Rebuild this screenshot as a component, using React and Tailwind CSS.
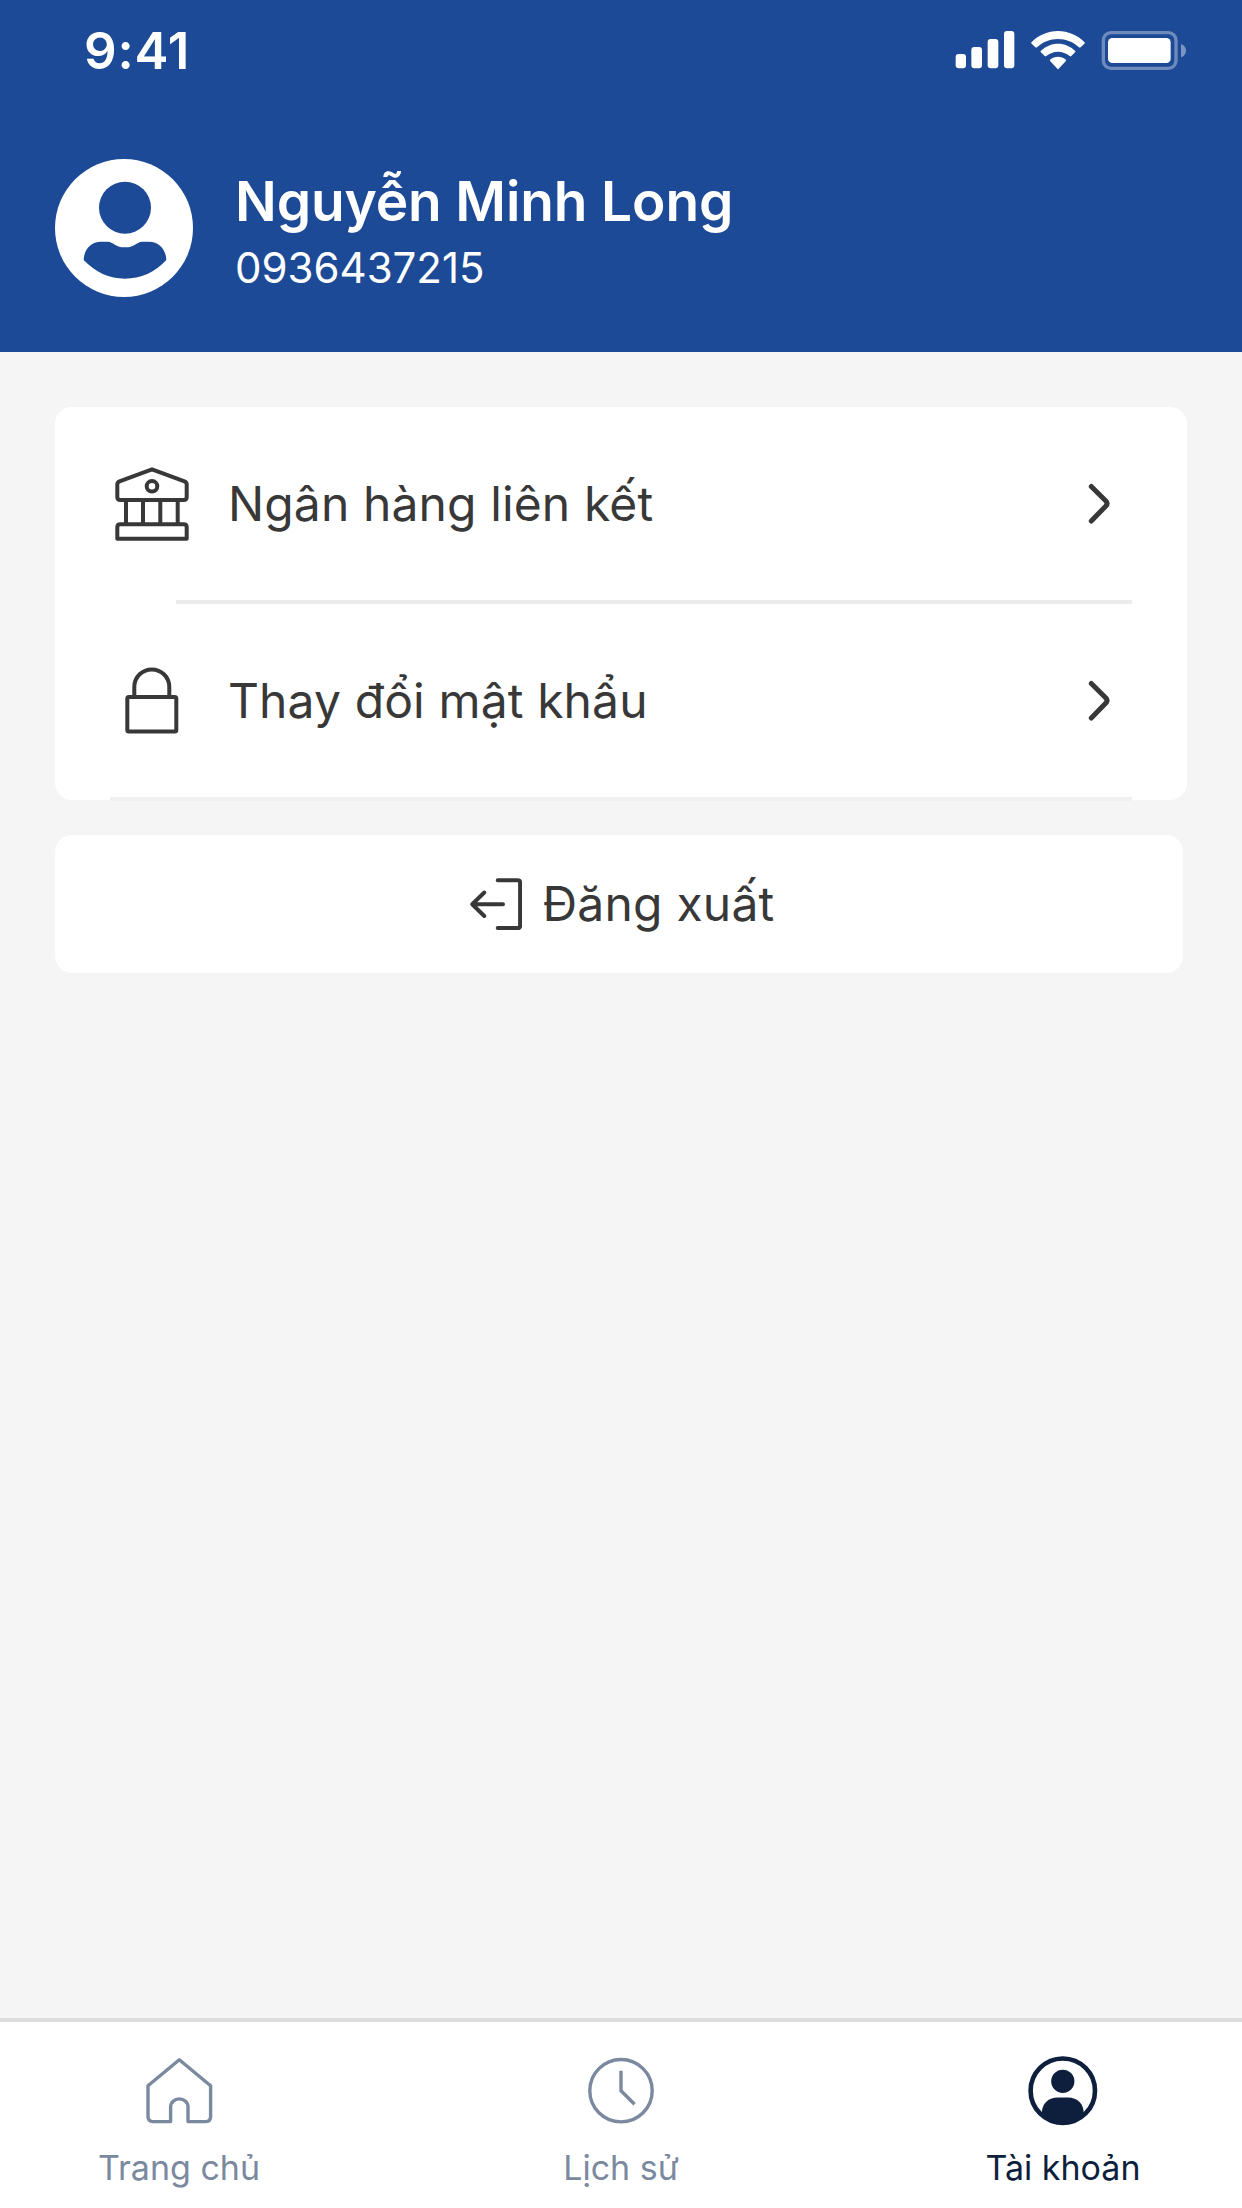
import React from 'react';

const SignalIcon = () => (
    <svg className="w-[60px] h-[38px]" viewBox="0 0 180 114" fill="currentColor">
        <rect x="2" y="69" width="31" height="43" rx="9" />
        <rect x="49" y="48" width="32" height="64" rx="9" />
        <rect x="98" y="24" width="32" height="88" rx="9" />
        <rect x="147" y="0" width="31" height="112" rx="9" />
    </svg>
);

const WifiIcon = () => (
    <svg className="w-[54px] h-[39px]" viewBox="0 0 162 117" fill="currentColor">
        <path d="M81 0C111 0 139 12 160 33C162 35 162 36 160 38L149 49C147 51 146 51 144 49C127 33 105 24 81 24C57 24 35 33 18 49C16 51 15 51 13 49L2 38C0 36 0 35 2 33C23 12 51 0 81 0Z" />
        <path d="M81 38C101 38 118 46 132 59C134 61 134 62 132 64L121 75C119 77 118 77 116 75C106 67 94 62 81 62C68 62 56 67 46 75C44 77 43 77 41 75L30 64C28 62 28 61 30 59C44 46 61 38 81 38Z" />
        <path d="M81 77C90 77 97 80 103 85C106 87 106 88 104 91L83 113C81 115 81 115 79 113L58 91C56 88 56 87 59 85C65 80 72 77 81 77Z" />
    </svg>
);

const BatteryIcon = () => (
    <svg className="w-[85px] h-[40px]" viewBox="0 0 255 120" fill="none">
        <rect x="7" y="5" width="218" height="107" rx="23" stroke="white" strokeOpacity="0.36" strokeWidth="10" />
        <rect x="21" y="21" width="188" height="75" rx="13" fill="white" />
        <path d="M240 39C249 42 255 50 255 59C255 68 249 76 240 79Z" fill="white" fillOpacity="0.42" />
    </svg>
);

const AvatarIcon = () => (
    <svg className="w-[138px] h-[138px]" viewBox="0 0 414 414">
        <circle cx="207" cy="207" r="207" fill="white" />
        <g fill="#1d4a96">
            <circle cx="210" cy="146" r="78" />
            <path d="M86 303C87 271 108 248 138 248H158C176 248 178 265 210 265C242 265 244 248 262 248H282C312 248 333 271 334 303C301 340 257 359 210 359C163 359 121 340 86 303Z" />
        </g>
    </svg>
);

const BankIcon = () => (
    <svg className="w-[74px] h-[74px]" viewBox="0 0 74 74" fill="none" stroke="currentColor" strokeWidth="4">
        <path d="M37 2.3L69.5 14.3C71 14.9 71.7 16 71.7 17.5V30C71.7 32 70.7 33 68.7 33H5.3C3.3 33 2.3 32 2.3 30V17.5C2.3 16 3 14.9 4.5 14.3L37 2.3Z" strokeLinejoin="round" />
        <circle cx="37" cy="19.3" r="5.3" />
        <path d="M11 33V57.5M28 33V57.5M45.3 33V57.5M62.7 33V57.5" />
        <path d="M2.3 71.7V60.3C2.3 58.3 3.3 57.3 5.3 57.3H68.7C70.7 57.3 71.7 58.3 71.7 60.3V71.7H2.3Z" strokeLinejoin="round" />
    </svg>
);

const LockIcon = () => (
    <svg className="w-[74px] h-[74px]" viewBox="0 0 74 74" fill="none" stroke="currentColor" strokeWidth="4">
        <rect x="12.3" y="32.9" width="49" height="34.7" rx="1.5" />
        <path d="M19.3 32.9V22.9A17.5 17.5 0 0 1 54.3 22.9V32.9" />
    </svg>
);

const ChevronIcon = () => (
    <svg className="w-[24px] h-[42px]" viewBox="0 0 24 42" fill="none" stroke="currentColor" strokeWidth="5" strokeLinecap="round" strokeLinejoin="round">
        <path d="M4.3 3.4L18.9 18C20.3 19.6 20.3 21.6 18.9 23L4.3 38" />
    </svg>
);

const LogoutIcon = () => (
    <svg className="w-[53px] h-[53px]" viewBox="0 0 53 53" fill="none" stroke="currentColor" strokeWidth="4" strokeLinecap="round" strokeLinejoin="round">
        <path d="M28.7 2.3H48.8C50.3 2.3 51.1 3.1 51.1 4.6V47.7C51.1 49.2 50.3 50 48.8 50H28.7" />
        <path d="M34 26.2H3.5M15.3 14.5L3.2 26.2L15.3 38" />
    </svg>
);

const HomeIcon = () => (
    <svg className="w-[70px] h-[70px]" viewBox="0 0 70 70" fill="none" stroke="currentColor" strokeWidth="3.4" strokeLinejoin="round">
        <path d="M35.3 3.8L66.6 29.7V60.5C66.6 63.8 64.9 65.6 61.6 65.6H44V51C44 46.3 40.2 42.9 35.3 42.9C30.4 42.9 26.6 46.3 26.6 51V65.6H9C5.7 65.6 4 63.8 4 60.5V29.7L35.3 3.8Z" />
    </svg>
);

const ClockIcon = () => (
    <svg className="w-[70px] h-[70px]" viewBox="0 0 70 70" fill="none" stroke="currentColor" strokeWidth="3.4">
        <circle cx="35" cy="34.7" r="31.2" />
        <path d="M35 14.7V34.7L48.6 48.3" />
    </svg>
);

const AccountIcon = () => (
    <svg className="w-[70px] h-[70px]" viewBox="0 0 70 70">
        <circle cx="34.8" cy="34.7" r="32.2" fill="none" stroke="currentColor" strokeWidth="4.6" />
        <circle cx="34.8" cy="25.3" r="11.6" fill="currentColor" />
        <path d="M13.8 57.7C13.8 47.7 19.8 41.4 29.8 41.4H39.8C49.8 41.4 55.8 47.7 55.8 57.7C49.8 65.7 43.8 68.7 34.8 68.7C25.8 68.7 19.8 65.7 13.8 57.7Z" fill="currentColor" />
    </svg>
);

const MenuItem = ({ icon, label }) => (
    <div className="flex items-center h-[193px] pl-[60px] pr-[76px]">
        {icon}
        <span className="ml-[39px] flex-1 text-5xl leading-[60px] tracking-[0.12px] whitespace-nowrap">{label}</span>
        <ChevronIcon />
    </div>
);

const tabs = [
    { label: 'Trang chủ', icon: <HomeIcon />, color: 'text-[#7b899f]' },
    { label: 'Lịch sử', icon: <ClockIcon />, color: 'text-[#7b899f]' },
    { label: 'Tài khoản', icon: <AccountIcon />, color: 'text-[#0d1f3c]' },
];

const App = () => {
    return (
        <div className="flex flex-col w-[1242px] h-[2208px] bg-[#f5f5f5] text-[#383838] font-['Inter',sans-serif] overflow-hidden">
            <header className="h-[352px] shrink-0 bg-[#1d4a96] text-white">
                <div className="flex justify-between h-[102px] pl-[84px] pr-[56px]">
                    <span className="mt-[21px] text-[51px] leading-[60px] tracking-[0.8px] font-semibold">9:41</span>
                    <div className="flex items-start mt-[31px] gap-[16px]">
                        <SignalIcon />
                        <WifiIcon />
                        <BatteryIcon />
                    </div>
                </div>
                <div className="flex items-center h-[138px] mt-[57px] pl-[55px]">
                    <AvatarIcon />
                    <div className="ml-[42px] pt-[12px]">
                        <p className="text-[55px] leading-[68px] tracking-[-0.12px] font-semibold">Nguyễn Minh Long</p>
                        <p className="text-[42px] leading-[66px]">0936437215</p>
                    </div>
                </div>
            </header>

            <main className="flex-1 pt-[55px] pl-[55px]">
                <div className="w-[1132px] h-[393px] bg-white rounded-[17px]">
                    <MenuItem icon={<BankIcon />} label="Ngân hàng liên kết" />
                    <div className="h-[4px] ml-[121px] mr-[55px] bg-[#ebebeb]" />
                    <MenuItem icon={<LockIcon />} label="Thay đổi mật khẩu" />
                    <div className="h-[4px] ml-[55px] mr-[55px] bg-[#f0f0f0]" />
                </div>
                <button className="flex items-center justify-center w-[1128px] h-[138px] mt-[35px] pl-[5px] bg-white rounded-[17px]">
                    <LogoutIcon />
                    <span className="ml-[21px] text-5xl leading-[60px] tracking-[0.2px]">Đăng xuất</span>
                </button>
            </main>

            <nav className="flex justify-between h-[190px] shrink-0 px-[55px] pt-[34px] border-t-4 border-[#dedede] bg-white">
                {tabs.map((tab) => (
                    <div key={tab.label} className={`flex flex-col items-center w-[248px] ${tab.color}`}>
                        {tab.icon}
                        <span className="mt-[20px] text-[34px] leading-[44px] whitespace-nowrap">{tab.label}</span>
                    </div>
                ))}
            </nav>
        </div>
    );
};

export default App;
